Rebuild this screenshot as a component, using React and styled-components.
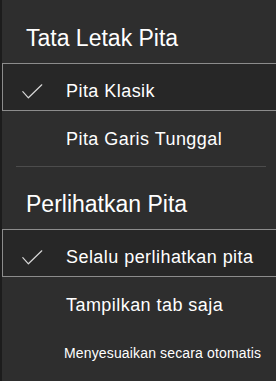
import React from 'react';
import styled, { createGlobalStyle } from 'styled-components';

const GlobalStyle = createGlobalStyle`
  html, body {
    margin: 0;
    padding: 0;
    background: #2e2e2e;
  }
  body {
    font-family: 'Liberation Sans', Arial, sans-serif;
  }
`;

const Menu = styled.div`
  width: 276px;
  height: 381px;
  box-sizing: border-box;
  padding-top: 1px;
  background: #2e2e2e;
  border-left: 2px solid #1c1c1c;
  color: #ffffff;
  overflow: hidden;
`;

const Heading = styled.div`
  height: 62px;
  box-sizing: border-box;
  padding: 22px 0 10px 24px;
  font-size: 23px;
  line-height: 30px;
  white-space: nowrap;
`;

const Item = styled.div`
  display: flex;
  align-items: center;
  height: 48px;
  box-sizing: border-box;
  padding-top: 8px;
  font-size: ${props => (props.small ? '14px' : '18px')};
  letter-spacing: ${props => (props.small ? '0.15px' : '0.45px')};
  white-space: nowrap;
  border: 1px solid ${props => (props.checked ? '#8c8c8c' : 'transparent')};
  border-right: none;
  background: ${props => (props.checked ? '#272727' : 'transparent')};
`;

const CheckSlot = styled.span`
  display: flex;
  align-items: center;
  width: ${props => (props.small ? '61px' : '63px')};
  padding-left: 19px;
  box-sizing: border-box;
  flex: none;
`;

const Separator = styled.hr`
  margin: 7px 10px 0 14px;
  border: none;
  border-top: 1px solid #4c4c4c;
  height: 0;
`;

function Check() {
  return (
    <svg width="21" height="15" viewBox="0 0 21 15" fill="none">
      <path
        d="M0.8 7.6 L6.4 13.8 L19.8 0.8"
        stroke="#d8d8d8"
        strokeWidth="1.2"
        strokeLinecap="round"
        strokeLinejoin="round"
      />
    </svg>
  );
}

function MenuItem({ checked, small, children }) {
  return (
    <Item checked={checked} small={small}>
      <CheckSlot small={small}>{checked && <Check />}</CheckSlot>
      {children}
    </Item>
  );
}

export default function App() {
  return (
    <>
      <GlobalStyle />
      <Menu>
        <Heading>Tata Letak Pita</Heading>
        <MenuItem checked>Pita Klasik</MenuItem>
        <MenuItem>Pita Garis Tunggal</MenuItem>
        <Separator />
        <Heading>Perlihatkan Pita</Heading>
        <MenuItem checked>Selalu perlihatkan pita</MenuItem>
        <MenuItem>Tampilkan tab saja</MenuItem>
        <MenuItem small>Menyesuaikan secara otomatis</MenuItem>
      </Menu>
    </>
  );
}
